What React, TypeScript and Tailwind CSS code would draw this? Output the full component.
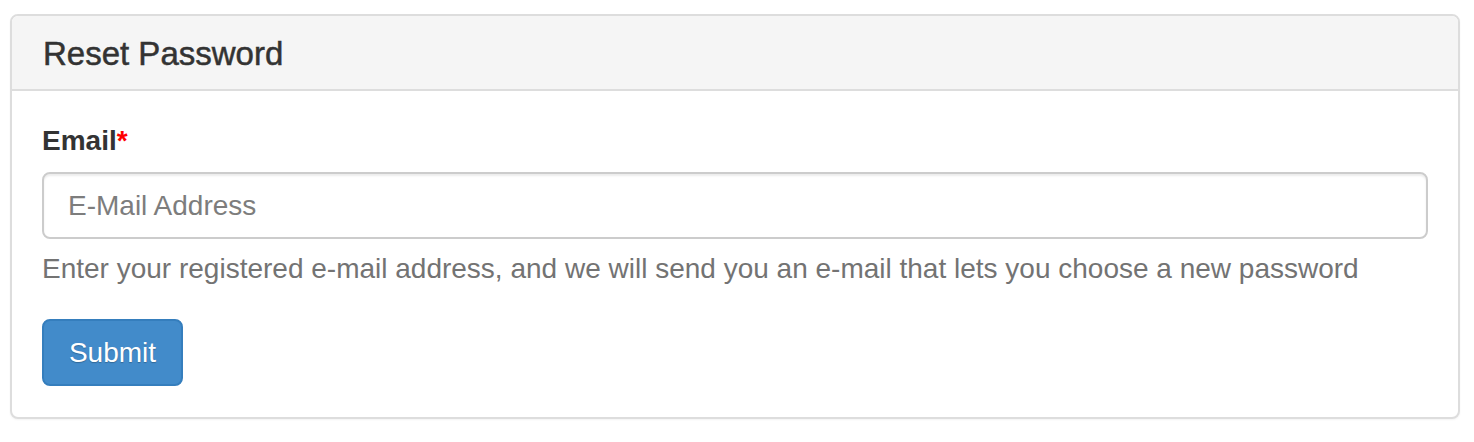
export default function App() {
  return (
    <main className="min-h-screen bg-white font-['Liberation_Sans',Arial,sans-serif] text-[#333]">
      <div className="pl-[10px] pt-[14px]">
        <section className="w-[1450px] overflow-hidden rounded-[8px] border-2 border-[#dddddd] bg-white shadow-[0_1px_2px_rgba(0,0,0,0.05)]">
          {/* header */}
          <div className="border-b-2 border-[#dddddd] bg-[#f5f5f5] px-[31px] pt-[20px] pb-[18px]">
            <h3 className="text-[33px] leading-[35px] font-normal text-[#333] [-webkit-text-stroke:0.5px_#333]">
              Reset Password
            </h3>
          </div>

          {/* body */}
          <div className="px-[30px] pt-[30px] pb-[31px]">
            <form onSubmit={(e) => e.preventDefault()}>
              <div className="mb-[30px]">
                <label className="mb-[11px] block text-[28px] leading-[40px] font-bold text-[#333]">
                  Email<span className="text-[#ff0000]">*</span>
                </label>
                <input
                  type="email"
                  placeholder="E-Mail Address"
                  className="block h-[67px] w-full rounded-[8px] border-2 border-[#cccccc] bg-white px-[24px] text-[28px] text-[#555] shadow-[inset_0_2px_2px_rgba(0,0,0,0.075)] outline-none placeholder:text-[#7d7d7d]"
                />
                <p className="mt-[10px] text-[28px] leading-[40px] text-[#737373]">
                  Enter your registered e-mail address, and we will send you an e-mail that lets you choose a new password
                </p>
              </div>
              <button
                type="submit"
                className="h-[67px] w-[141px] rounded-[8px] border-2 border-[#357ebd] bg-[#428bca] text-[28px] leading-[40px] text-white [text-shadow:0_1px_1px_rgba(0,0,0,0.25)]"
              >
                Submit
              </button>
            </form>
          </div>
        </section>
      </div>
    </main>
  );
}
